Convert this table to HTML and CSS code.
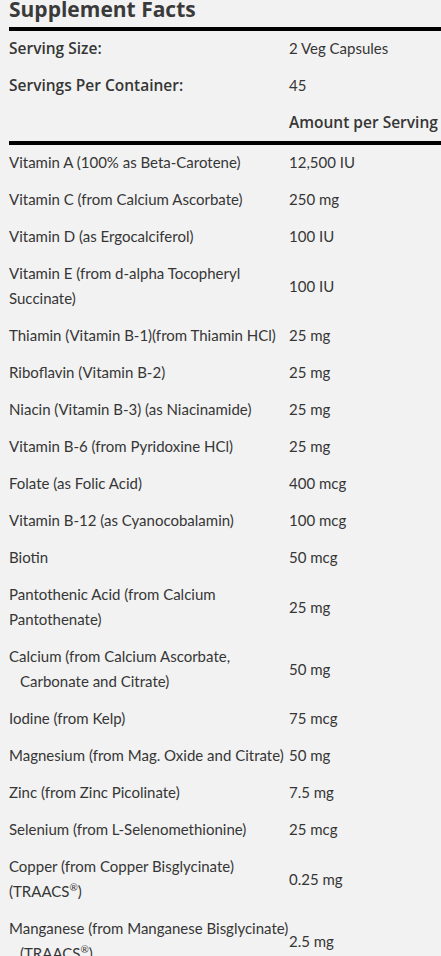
FILE: index.html
```html
<!DOCTYPE html>
<html>
<head>
<meta charset="utf-8">
<link rel="stylesheet" href="styles.css">
</head>
<body>
<div class="facts">
  <h2 class="title">Supplement Facts</h2>
  <table class="tbl">
    <tbody class="head">
      <tr><td class="lbl">Serving Size:</td><td>2 Veg Capsules</td></tr>
      <tr><td class="lbl">Servings Per Container:</td><td>45</td></tr>
      <tr class="last"><td></td><td class="lbl">Amount per Serving</td></tr>
    </tbody>
    <tbody class="body">
      <tr><td>Vitamin A (100% as Beta-Carotene)</td><td>12,500 IU</td></tr>
      <tr><td>Vitamin C (from Calcium Ascorbate)</td><td>250 mg</td></tr>
      <tr><td>Vitamin D (as Ergocalciferol)</td><td>100 IU</td></tr>
      <tr><td>Vitamin E (from d-alpha Tocopheryl<br>Succinate)</td><td>100 IU</td></tr>
      <tr><td>Thiamin (Vitamin B-1)(from Thiamin HCl)</td><td>25 mg</td></tr>
      <tr><td>Riboflavin (Vitamin B-2)</td><td>25 mg</td></tr>
      <tr><td>Niacin (Vitamin B-3) (as Niacinamide)</td><td>25 mg</td></tr>
      <tr><td>Vitamin B-6 (from Pyridoxine HCl)</td><td>25 mg</td></tr>
      <tr><td>Folate (as Folic Acid)</td><td>400 mcg</td></tr>
      <tr><td>Vitamin B-12 (as Cyanocobalamin)</td><td>100 mcg</td></tr>
      <tr><td>Biotin</td><td>50 mcg</td></tr>
      <tr><td>Pantothenic Acid (from Calcium<br>Pantothenate)</td><td>25 mg</td></tr>
      <tr><td>Calcium (from Calcium Ascorbate,<br><span class="ind">Carbonate and Citrate)</span></td><td>50 mg</td></tr>
      <tr><td>Iodine (from Kelp)</td><td>75 mcg</td></tr>
      <tr><td>Magnesium (from Mag. Oxide and Citrate)</td><td>50 mg</td></tr>
      <tr><td>Zinc (from Zinc Picolinate)</td><td>7.5 mg</td></tr>
      <tr><td>Selenium (from L-Selenomethionine)</td><td>25 mcg</td></tr>
      <tr><td>Copper (from Copper Bisglycinate)<br>(TRAACS<sup>®</sup>)</td><td>0.25 mg</td></tr>
      <tr><td>Manganese (from Manganese Bisglycinate)<br><span class="ind">(TRAACS<sup>®</sup>)</span></td><td>2.5 mg</td></tr>
    </tbody>
  </table>
</div>
</body>
</html>
```
FILE: styles.css
```css
html, body {
  margin: 0;
  padding: 0;
  background: #f2f2f2;
}
body {
  padding: 0 0 0 9px;
  overflow: hidden;
  color: #363636;
  font-family: Lato, "Open Sans", sans-serif;
}
.facts {
  width: 440px;
}
.title {
  font-family: "Open Sans", sans-serif;
  font-weight: 700;
  font-size: 21px;
  line-height: 22px;
  margin: -2px 0 0 0;
  padding-bottom: 7px;
  border-bottom: 4px solid #000;
  color: #3a3a3a;
}
.tbl {
  border-collapse: collapse;
  width: 440px;
  font-size: 15px;
  line-height: 25px;
}
.tbl td {
  padding: 6px 0;
  vertical-align: middle;
}
.tbl td:first-child {
  width: 280px;
  white-space: nowrap;
}
.lbl {
  font-family: "Open Sans", sans-serif;
  font-weight: 600;
  font-size: 15.5px;
}
.head tr:first-child td {
  padding-top: 5px;
}
.head tr.last td {
  border-bottom: 4px solid #000;
}
.body tr:first-child td {
  padding-top: 5px;
}
.ind {
  padding-left: 11px;
}
sup {
  font-size: 10px;
  line-height: 0;
}
```
